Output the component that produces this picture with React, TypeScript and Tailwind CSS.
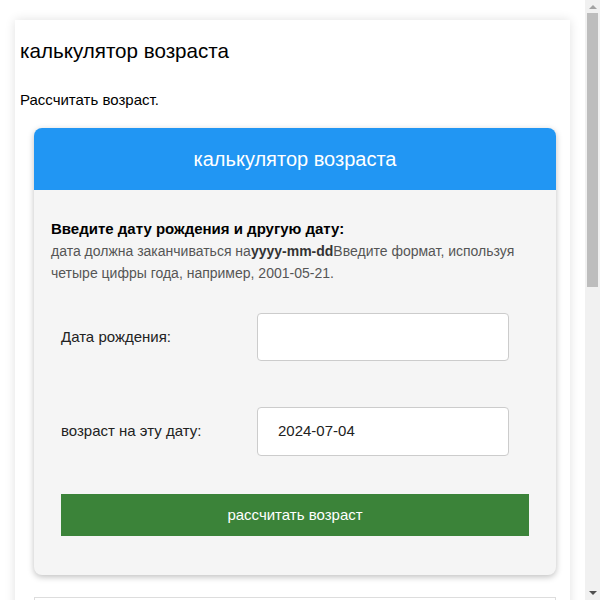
export default function App() {
  return (
    <div className="min-h-[1253px] bg-white pt-[20px] pl-[15px] pr-[30px] font-['Liberation_Sans',Arial,sans-serif]">
      <div className="bg-white shadow-[0_0_10px_rgba(0,0,0,0.12)] pl-[5px] pb-[40px] min-h-[1200px]">
        <h1 className="text-[20.6px] leading-[24px] text-black pt-[19px] m-0">калькулятор возраста</h1>
        <p className="text-[15px] leading-[20px] text-black mt-[27px]">Рассчитать возраст.</p>
        <div className="ml-[14px] mr-[14px] mt-[18px] rounded-[8px] shadow-[0_2px_6px_rgba(0,0,0,0.25)] overflow-hidden bg-[#f5f5f5]">
          <div className="h-[62px] bg-[#2196f3] flex items-center justify-center text-white text-[20px]">калькулятор возраста</div>
          <div className="px-[17px] pt-[28px] pb-[39px]">
            <div className="text-[15px] leading-[22px] font-bold text-black">Введите дату рождения и другую дату:</div>
            <div className="text-[14px] leading-[22px] text-[#555]">
              дата должна заканчиваться на<b className="text-[#333]">yyyy-mm-dd</b>Введите формат, используя четыре цифры года, например, 2001-05-21.
            </div>
            <div className="px-[10px] mt-[29px]">
              <div className="flex items-center h-[48px]">
                <label className="w-[196px] text-[15px] text-[#222]">Дата рождения:</label>
                <div className="w-[252px] h-[48px] bg-white border border-[#ccc] rounded-[4px]"></div>
              </div>
              <div className="flex items-center h-[49px] mt-[46px]">
                <label className="w-[196px] text-[15px] text-[#222]">возраст на эту дату:</label>
                <div className="w-[252px] h-[49px] bg-white border border-[#ccc] rounded-[4px] flex items-center pl-[20px] text-[15px] text-[#222]">2024-07-04</div>
              </div>
              <button className="mt-[38px] w-full h-[42px] bg-[#3b8339] text-white text-[15px] flex items-center justify-center">рассчитать возраст</button>
            </div>
          </div>
        </div>
        <div className="ml-[14px] mr-[14px] mt-[22px] h-[300px] border border-[#ddd] bg-white"></div>
      </div>
      <div className="fixed top-0 right-0 w-[15px] h-[600px] bg-[#f1f1f1]">
        <div className="absolute top-[5px] left-[4px] w-0 h-0 border-l-[4px] border-r-[4px] border-b-[4px] border-l-transparent border-r-transparent border-b-[#a3a3a3]"></div>
        <div className="absolute top-[13px] left-[2px] w-[11px] h-[274px] bg-[#bdbdbd]"></div>
        <div className="absolute bottom-[5px] left-[4px] w-0 h-0 border-l-[4px] border-r-[4px] border-t-[4px] border-l-transparent border-r-transparent border-t-[#505050]"></div>
      </div>
    </div>
  );
}
